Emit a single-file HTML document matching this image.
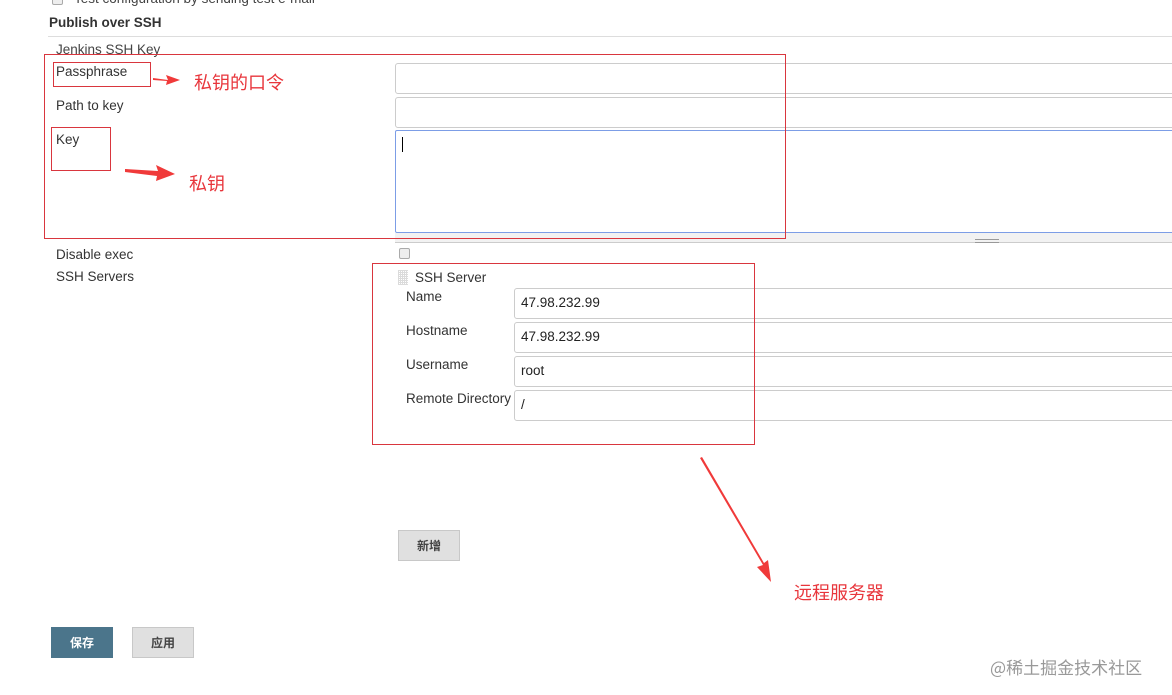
<!DOCTYPE html>
<html><head><meta charset="utf-8"><style>
body{margin:0;width:1172px;height:695px;background:#fff;position:relative;overflow:hidden;font-family:"Liberation Sans","Noto Sans CJK SC",sans-serif;color:#333;font-size:13.5px}
.a{position:absolute}
.in{position:absolute;border:1px solid #ccc;border-radius:3px;background:#fff;box-sizing:border-box;font-size:13.5px;color:#222;padding-left:6px;line-height:28px}
.red{position:absolute;border:1px solid #d9363e;box-sizing:border-box}
.rt{position:absolute;color:#e8363c;font-size:18px;font-family:"Noto Sans CJK SC",sans-serif}
.btn{position:absolute;background:#e0e0e0;border:1px solid #c8c8c8;box-sizing:border-box;font-size:12px;font-weight:bold;text-align:center;color:#444;font-family:"Noto Sans CJK SC",sans-serif}
</style></head><body>
<div class="a" style="left:52px;top:-6px;width:9px;height:9px;border:1px solid #aaa;border-radius:2px;background:#eee"></div>
<div class="a" style="left:74px;top:-9px;color:#444">Test configuration by sending test e-mail</div>
<div class="a" style="left:49px;top:15px;font-weight:bold;font-size:13.5px;color:#333">Publish over SSH</div>
<div class="a" style="left:48px;top:36px;width:1124px;border-top:1px solid #ddd"></div>
<div class="a" style="left:56px;top:42px;color:#444">Jenkins SSH Key</div>
<div class="a" style="left:56px;top:64px">Passphrase</div>
<div class="a" style="left:56px;top:98px">Path to key</div>
<div class="a" style="left:56px;top:132px">Key</div>
<div class="in" style="left:395px;top:63px;width:790px;height:31px"></div>
<div class="in" style="left:395px;top:97px;width:790px;height:31px"></div>
<div class="in" style="left:395px;top:130px;width:790px;height:103px;border:1px solid #7c9de6;border-radius:2px"></div>
<div class="a" style="left:402px;top:137px;width:1px;height:15px;background:#000"></div>
<div class="a" style="left:395px;top:233px;width:790px;height:9px;background:#f2f2f2;border-bottom:1px solid #ccc"></div>
<div class="a" style="left:975px;top:239px;width:24px;height:2px;border-top:1px solid #999;border-bottom:1px solid #999"></div>
<div class="a" style="left:56px;top:247px">Disable exec</div>
<div class="a" style="left:399px;top:248px;width:9px;height:9px;border:1px solid #aaa;border-radius:2px;background:#eee"></div>
<div class="a" style="left:56px;top:269px">SSH Servers</div>
<div class="a" style="left:398px;top:270px;width:10px;height:15px;background:repeating-linear-gradient(90deg,#ccc 0 1px,transparent 1px 2px),repeating-linear-gradient(0deg,#ccc 0 1px,transparent 1px 2px);opacity:.7"></div>
<div class="a" style="left:415px;top:270px">SSH Server</div>
<div class="a" style="left:406px;top:289px">Name</div>
<div class="a" style="left:406px;top:323px">Hostname</div>
<div class="a" style="left:406px;top:357px">Username</div>
<div class="a" style="left:406px;top:391px">Remote Directory</div>
<div class="in" style="left:514px;top:288px;width:700px;height:31px">47.98.232.99</div>
<div class="in" style="left:514px;top:322px;width:700px;height:31px">47.98.232.99</div>
<div class="in" style="left:514px;top:356px;width:700px;height:31px">root</div>
<div class="in" style="left:514px;top:390px;width:700px;height:31px">/</div>
<div class="btn" style="left:398px;top:530px;width:62px;height:31px;line-height:29px">新增</div>
<div class="btn" style="left:51px;top:627px;width:62px;height:31px;line-height:29px;background:#4b758b;border-color:#4b758b;color:#fff">保存</div>
<div class="btn" style="left:132px;top:627px;width:62px;height:31px;line-height:29px">应用</div>
<div class="red" style="left:44px;top:54px;width:742px;height:185px"></div>
<div class="red" style="left:53px;top:62px;width:98px;height:25px"></div>
<div class="red" style="left:51px;top:127px;width:60px;height:44px"></div>
<div class="red" style="left:372px;top:263px;width:383px;height:182px"></div>
<div class="rt" style="left:194px;top:69px">私钥的口令</div>
<div class="rt" style="left:189px;top:170px">私钥</div>
<div class="rt" style="left:794px;top:579px">远程服务器</div>
<svg class="a" style="left:0;top:0" width="1172" height="695">
<path d="M153 78 L168 80 L166 75 L180 80 L166 85 L167 81 L153 80Z" fill="#f03a3a"/>
<path d="M125 169 L158 171 L156 165 L175 174 L156 181 L157 176 L125 172Z" fill="#f03a3a"/>
<path d="M700 458 L763 565 L757 567 L771 582 L768 560 L764 563 L702 457Z" fill="#f03a3a"/>
</svg>
<div class="a" style="left:990px;top:654px;font-size:17px;color:#999;font-family:'Noto Sans CJK SC',sans-serif">@稀土掘金技术社区</div>
</body></html>
